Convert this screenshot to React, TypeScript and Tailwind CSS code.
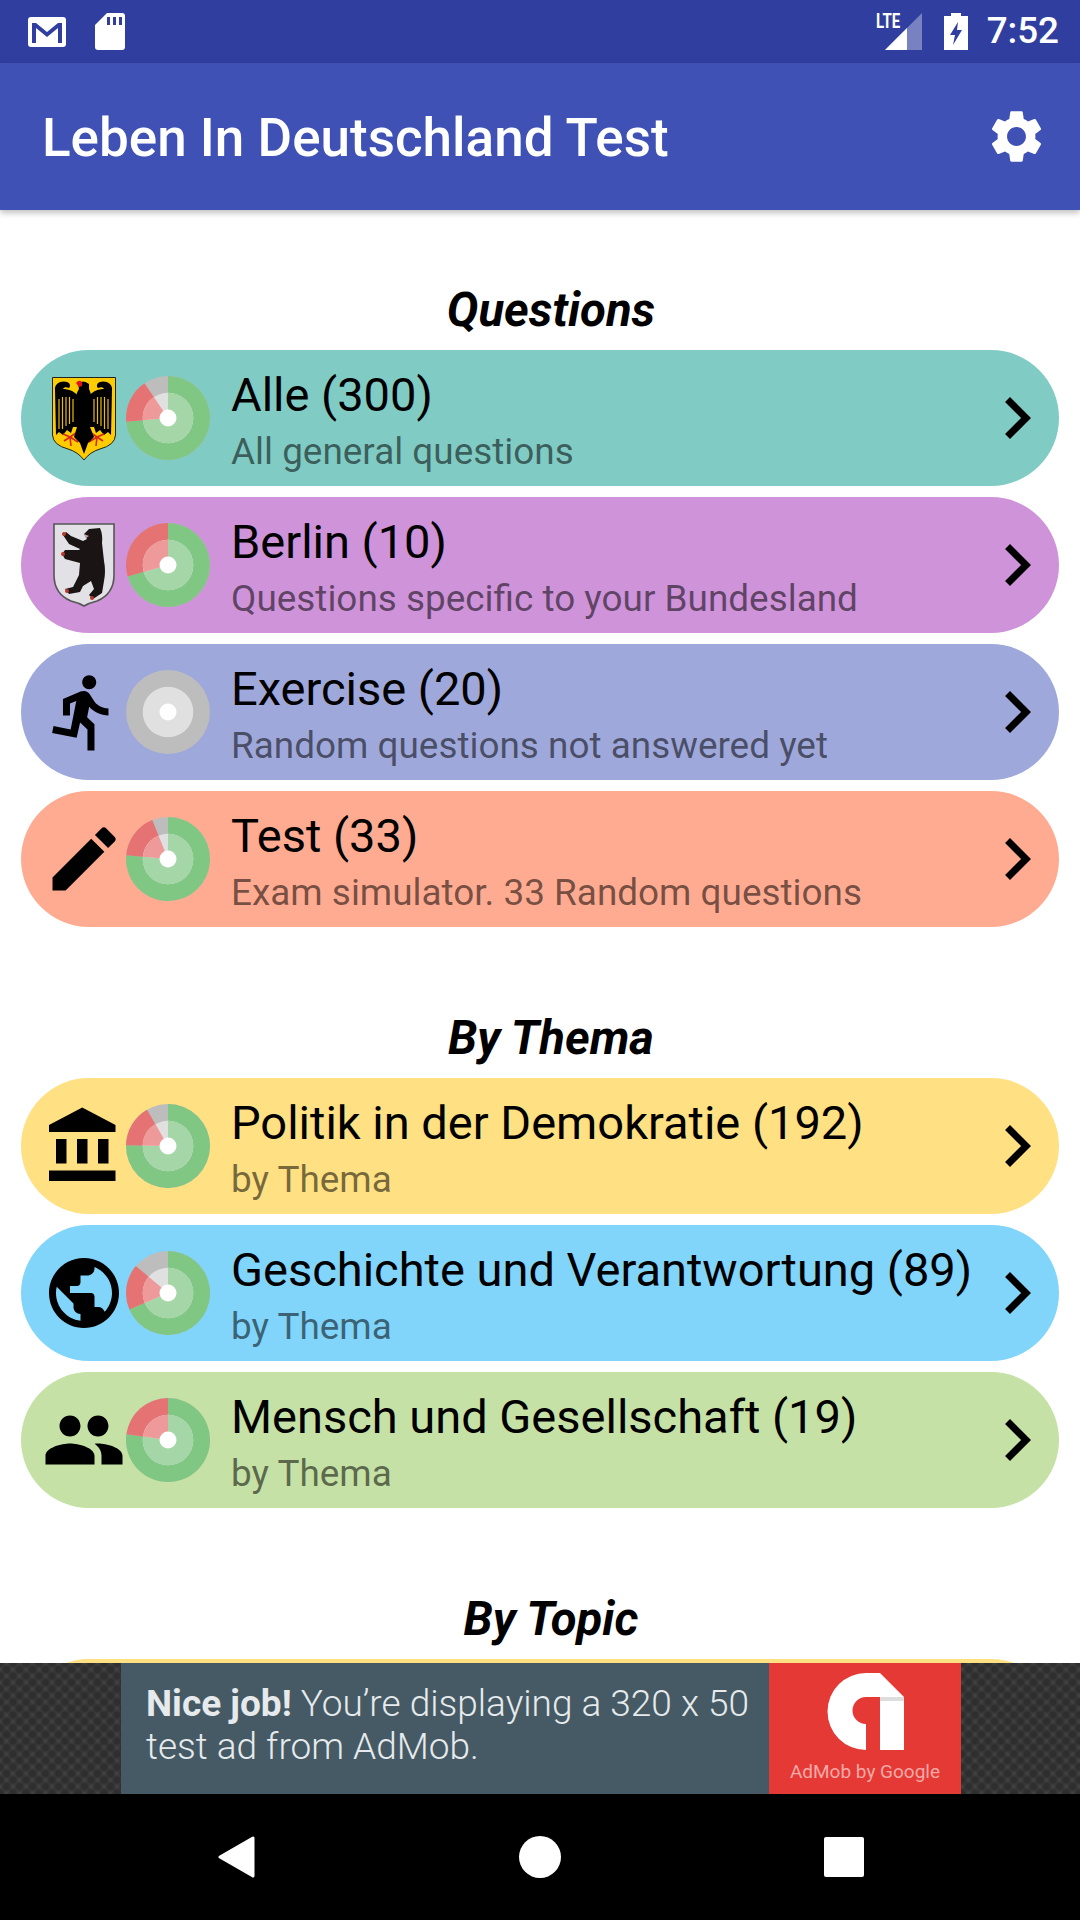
import type { ReactNode } from "react";
import {
  MdChevronRight,
  MdDirectionsRun,
  MdEdit,
  MdPeople,
  MdPublic,
  MdSettings,
} from "react-icons/md";

// angles are degrees clockwise from 12 o'clock: green ends at `green`, red at `red`, the rest is grey
type Stats = { green: number; red: number };

function wedge(r: number, from: number, to: number) {
  const toXY = (deg: number) => {
    const rad = ((deg - 90) * Math.PI) / 180;
    return `${42 + r * Math.cos(rad)} ${42 + r * Math.sin(rad)}`;
  };
  const large = to - from > 180 ? 1 : 0;
  return `M42 42 L${toXY(from)} A${r} ${r} 0 ${large} 1 ${toXY(to)} Z`;
}

function Donut({ stats }: { stats: Stats }) {
  const { green, red } = stats;
  return (
    <svg viewBox="0 0 84 84" className="h-[84px] w-[84px] shrink-0">
      <circle cx="42" cy="42" r="42" fill="#bdbdbd" />
      {green > 0 && <path d={wedge(42, 0, green)} fill="#81c784" />}
      {red > green && <path d={wedge(42, green, red)} fill="#e57373" />}
      <circle cx="42" cy="42" r="25.3" fill="#e0e0e0" />
      {green > 0 && <path d={wedge(25.3, 0, green)} fill="#a5d6a7" />}
      {red > green && <path d={wedge(25.3, green, red)} fill="#ef9a9a" />}
      <circle cx="42" cy="42" r="8.5" fill="#fff" />
    </svg>
  );
}

function Eagle() {
  const wing = (
    <>
      <path
        d="M3 13C2 6 10 3 15 5C18 6 19 9 17 11C14 10 12 10 11 12C16 12 22 14 25 18L25 50L21 50L19 56L15 53L11 58L7 55L4 58Z"
        fill="#000"
      />
      <path
        d="M7 22V52M10.5 20V52M14 20V49M17.5 20V47M21 22V45"
        stroke="#e8bb10"
        strokeWidth="1.2"
      />
      <path
        d="M24 56L12 64M18 60L11 57M18 60L19 69M18 60L26 65"
        stroke="#d8261c"
        strokeWidth="1.6"
        fill="none"
      />
    </>
  );
  return (
    <svg viewBox="0 0 64 83" className="h-[83px] w-[64px]">
      <path
        d="M.5.5H63.5V58Q63 68 48 72Q38 75 32 83Q26 75 16 72Q1 68 .5 58Z"
        fill="#ffcc00"
        stroke="#222"
        strokeWidth="1"
      />
      {wing}
      <g transform="matrix(-1 0 0 1 63 0)">{wing}</g>
      <path
        d="M26 7Q31 2 37 7L37 12Q40 18 39 24L38 50L42 60L36 66L32 77L28 66L22 60L25 50L24 24Q23 18 27 12Z"
        fill="#000"
      />
      <path d="M24 6Q27 2 30 5L30 9L27 10Z" fill="#e0141e" />
    </svg>
  );
}

function Bear() {
  return (
    <svg viewBox="0 0 62 84" className="h-[84px] w-[62px]">
      <path
        d="M1 1H61V52Q61 71 44 78Q36 80 31 83Q26 80 18 78Q1 71 1 52Z"
        fill="#e2e2e6"
        stroke="#555"
        strokeWidth="1.6"
      />
      <path
        d="M31 11L36 6L47 5Q50 12 49 20L51 38Q53 48 51 58L49 70L40 76L36 72L41 66L38 58L30 63L27 69L16 71L12 66L20 64L26 52L27 40L12 36L9 31L12 27L26 27L27 26L16 21L10 12L13 9L18 13L30 18L34 16Z"
        fill="#1a1414"
      />
      <path d="M31 11L36 13L33 15Z" fill="#c9a0a0" />
      <circle cx="11" cy="11" r="2" fill="#b8362c" />
      <circle cx="10" cy="31" r="2" fill="#b8362c" />
      <circle cx="14" cy="68" r="2" fill="#b8362c" />
      <circle cx="39" cy="75" r="2" fill="#b8362c" />
    </svg>
  );
}

function Bank() {
  return (
    <svg viewBox="0 0 24 24" className="h-[84px] w-[84px]">
      <path d="M4 10v7h3v-7H4zm6 0v7h3v-7h-3zM2 22h19v-3H2v3zm14-12v7h3v-7h-3zm-4.5-9L2 6v2h19V6l-9.5-5z" />
    </svg>
  );
}

type Row = {
  bg: string;
  icon: ReactNode;
  title: string;
  sub: string;
  stats: Stats;
};

const questions: Row[] = [
  {
    bg: "bg-[#80cbc4]",
    icon: <Eagle />,
    title: "Alle (300)",
    sub: "All general questions",
    stats: { green: 265, red: 326 },
  },
  {
    bg: "bg-[#ce93d8]",
    icon: <Bear />,
    title: "Berlin (10)",
    sub: "Questions specific to your Bundesland",
    stats: { green: 254, red: 360 },
  },
  {
    bg: "bg-[#9fa8da]",
    icon: <MdDirectionsRun size={84} />,
    title: "Exercise (20)",
    sub: "Random questions not answered yet",
    stats: { green: 0, red: 0 },
  },
  {
    bg: "bg-[#ffab91]",
    icon: <MdEdit size={84} />,
    title: "Test (33)",
    sub: "Exam simulator. 33 Random questions",
    stats: { green: 275, red: 338 },
  },
];

const byThema: Row[] = [
  {
    bg: "bg-[#ffe082]",
    icon: <Bank />,
    title: "Politik in der Demokratie (192)",
    sub: "by Thema",
    stats: { green: 271, red: 330 },
  },
  {
    bg: "bg-[#81d4fa]",
    icon: <MdPublic size={84} />,
    title: "Geschichte und Verantwortung (89)",
    sub: "by Thema",
    stats: { green: 247, red: 310 },
  },
  {
    bg: "bg-[#c5e1a5]",
    icon: <MdPeople size={84} />,
    title: "Mensch und Gesellschaft (19)",
    sub: "by Thema",
    stats: { green: 278, red: 360 },
  },
];

function Pill({ row }: { row: Row }) {
  return (
    <div className={`flex h-[136px] items-center rounded-[68px] pl-[20px] ${row.bg}`}>
      <div className="flex h-[84px] w-[85px] shrink-0 items-center justify-center">
        {row.icon}
      </div>
      <Donut stats={row.stats} />
      <div className="ml-[21px] flex min-w-0 flex-1 flex-col pt-[8px]">
        <span className="text-[47px] leading-[56px] whitespace-nowrap text-black">
          {row.title}
        </span>
        <span className="mt-[4px] text-[36.9px] leading-[50px] whitespace-nowrap text-black/55">
          {row.sub}
        </span>
      </div>
      <MdChevronRight size={84} className="shrink-0" />
    </div>
  );
}

function Heading({ children }: { children: ReactNode }) {
  return (
    <h2 className="mb-3 h-[56px] pl-[22px] text-center text-[47.25px] leading-[56px] font-bold text-black italic">
      {children}
    </h2>
  );
}

function StatusBar() {
  return (
    <div className="flex h-[63px] shrink-0 items-center bg-[#303f9f] pr-[21px] pl-[28px] text-white">
      <svg viewBox="0 0 38 30" className="h-[30px] w-[38px]">
        <rect width="38" height="30" rx="3" fill="#fff" />
        <path d="M4 26V6H8L19 15L30 6H34V26H30V11L19 20L8 11V26Z" fill="#303f9f" />
      </svg>
      <svg viewBox="0 0 30 37" className="ml-[29px] h-[37px] w-[30px]">
        <path
          d="M12 0H27Q30 0 30 3V34Q30 37 27 37H3Q0 37 0 34V12Z"
          fill="#fff"
        />
        <path d="M12 4H15V12H12ZM18 4H21V12H18ZM24 4H27V12H24Z" fill="#303f9f" />
      </svg>
      <div className="relative ml-auto h-[37px] w-[46px]">
        <svg viewBox="0 0 37 37" className="absolute right-0 h-[37px] w-[37px]">
          <path d="M37 0V37H0Z" fill="#fff" fillOpacity="0.35" />
          <path d="M22 15V37H0Z" fill="#fff" />
        </svg>
        <span className="absolute top-[-2px] left-0 origin-left scale-x-[0.75] text-[20px] leading-[20px] font-bold">
          LTE
        </span>
      </div>
      <svg viewBox="0 0 24 37" className="ml-[22px] h-[37px] w-[24px]">
        <path
          d="M7 0H17V3H24V37H0V3H7ZM14 9L6 22H11L9 32L18 17H13Z"
          fill="#fff"
          fillRule="evenodd"
        />
      </svg>
      <span className="ml-[19px] text-[36.75px] leading-none font-medium">7:52</span>
    </div>
  );
}

function AdBanner() {
  return (
    <div className="flex h-[131px] shrink-0 justify-center bg-[#424242] bg-[radial-gradient(circle,#2e2e2e_30%,transparent_65%),radial-gradient(circle,#2e2e2e_30%,transparent_65%)] bg-size-[13px_13px] bg-position-[0_0,6.5px_6.5px] pl-[2px]">
      <div className="flex w-[648px] flex-col justify-center bg-[#455a64] pb-[7px] pl-[25px] text-[37px] leading-[43px] font-light text-[#e6eaec]">
        <div className="whitespace-nowrap">
          <span className="font-bold">Nice job!</span> You’re displaying a 320 x 50
        </div>
        <div>test ad from AdMob.</div>
      </div>
      <div className="flex w-[192px] flex-col items-center bg-[#e53935] pt-[10px]">
        <svg viewBox="0 0 77 77" className="h-[77px] w-[77px]">
          <path
            d="M39 0H53L77 24V77H53V24H39A13.5 13.5 0 0 0 39 51V77A38.5 38.5 0 0 1 39 0Z"
            fill="#fff"
          />
          <rect x="53" y="24" width="24" height="4" fill="#dddddd" />
        </svg>
        <span className="mt-[9px] text-[19px] leading-[26px] whitespace-nowrap text-[#f7a9a7]">
          AdMob by Google
        </span>
      </div>
    </div>
  );
}

function NavBar() {
  return (
    <div className="flex h-[126px] shrink-0 items-center bg-black pl-[218px]">
      <svg viewBox="0 0 37 42" className="h-[42px] w-[37px]">
        <path d="M35 2V40L2 21Z" fill="#fff" stroke="#fff" strokeWidth="3" strokeLinejoin="round" />
      </svg>
      <div className="ml-[264px] h-[42px] w-[42px] rounded-full bg-white" />
      <div className="ml-[263px] h-[40px] w-[40px] rounded-[2px] bg-white" />
    </div>
  );
}

export default function App() {
  return (
    <div className="flex h-[1920px] w-[1080px] flex-col overflow-hidden bg-white font-['Roboto',sans-serif]">
      <StatusBar />
      <header className="relative z-10 flex h-[147px] shrink-0 items-center justify-between bg-[#3f51b5] pr-[32px] pl-[42px] shadow-[0_3px_6px_rgba(0,0,0,0.25)]">
        <h1 className="pt-[5px] text-[53px] font-medium text-white">Leben In Deutschland Test</h1>
        <MdSettings size={63} className="text-white" />
      </header>
      <main className="min-h-0 flex-1 overflow-hidden px-[21px] pt-[72px]">
        <Heading>Questions</Heading>
        <div className="flex flex-col gap-[11px]">
          {questions.map((row) => (
            <Pill key={row.title} row={row} />
          ))}
        </div>
        <div className="mt-[83px]">
          <Heading>By Thema</Heading>
        </div>
        <div className="flex flex-col gap-[11px]">
          {byThema.map((row) => (
            <Pill key={row.title} row={row} />
          ))}
        </div>
        <div className="mt-[83px]">
          <Heading>By Topic</Heading>
        </div>
        <div className="h-[136px] rounded-[68px] bg-[#ffe082]" />
      </main>
      <AdBanner />
      <NavBar />
    </div>
  );
}
